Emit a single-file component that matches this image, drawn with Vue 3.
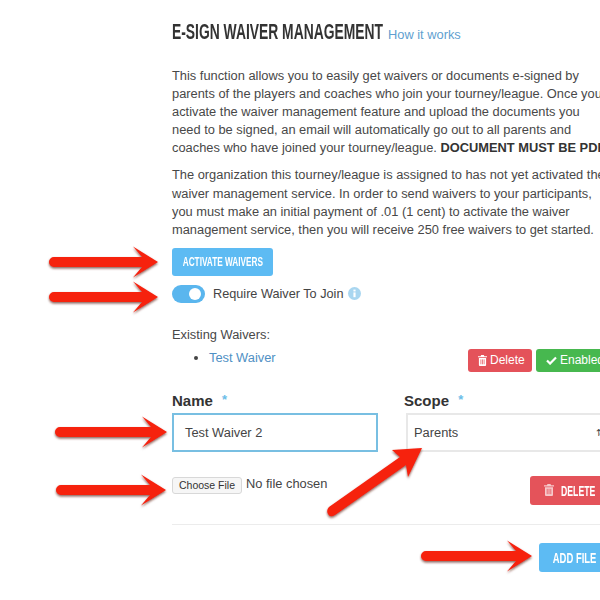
<template>
  <div class="page">
    <div class="panel">
      <div class="title-row">
        <h1 class="title"><span class="squeeze">E-SIGN WAIVER MANAGEMENT</span></h1>
        <a class="how">How it works</a>
      </div>

      <p class="para">
        This function allows you to easily get waivers or documents e-signed by<br />
        parents of the players and coaches who join your tourney/league. Once you<br />
        activate the waiver management feature and upload the documents you<br />
        need to be signed, an email will automatically go out to all parents and<br />
        coaches who have joined your tourney/league. <b>DOCUMENT MUST BE PDF.</b>
      </p>
      <p class="para second">
        The organization this tourney/league is assigned to has not yet activated the<br />
        waiver management service. In order to send waivers to your participants,<br />
        you must make an initial payment of .01 (1 cent) to activate the waiver<br />
        management service, then you will receive 250 free waivers to get started.
      </p>

      <button class="btn btn-blue activate"><span class="squeeze">ACTIVATE WAIVERS</span></button>

      <div class="toggle-row">
        <span class="toggle"><span class="knob"></span></span>
        <span class="toggle-label">Require Waiver To Join</span>
        <svg class="info" viewBox="0 0 12 12" width="13" height="13">
          <circle cx="6" cy="6" r="6" fill="#a9d6f0" />
          <rect x="5" y="5" width="2" height="4.4" fill="#fff" />
          <rect x="5" y="2.4" width="2" height="1.7" fill="#fff" />
        </svg>
      </div>

      <div class="existing-label">Existing Waivers:</div>
      <div class="existing-row">
        <ul class="list"><li><a>Test Waiver</a></li></ul>
        <div class="actions">
          <button class="small small-red">
            <svg viewBox="0 0 10 12" width="9" height="11">
              <path fill="#fff" d="M3.5 0h3l.6 1.2H10v1.3H0V1.2h2.9zM1 3.3h8V11a1 1 0 0 1-1 1H2a1 1 0 0 1-1-1z" />
              <path stroke="#e4525a" stroke-width=".8" d="M3.2 4.8v5.4M5 4.8v5.4M6.8 4.8v5.4" />
            </svg>
            Delete
          </button>
          <button class="small small-green">
            <svg viewBox="0 0 12 10" width="11" height="9">
              <path fill="none" stroke="#fff" stroke-width="2.4" d="M1 5l3.4 3.4L11 1.6" />
            </svg>
            Enabled
          </button>
        </div>
      </div>

      <div class="form-row">
        <div class="col-name">
          <label class="label">Name <span class="star">*</span></label>
          <div class="input focused">Test Waiver 2</div>
          <div class="file-row">
            <span class="choose">Choose File</span>
            <span class="no-file">No file chosen</span>
          </div>
        </div>
        <div class="col-scope">
          <label class="label">Scope <span class="star">*</span></label>
          <div class="input select">Parents<span class="caret">⇅</span></div>
          <div class="delete-wrap">
            <button class="btn btn-red">
              <svg viewBox="0 0 10 12" width="10" height="12">
                <path fill="#f6c9cb" d="M3.5 0h3l.6 1.2H10v1.3H0V1.2h2.9zM1 3.3h8V11a1 1 0 0 1-1 1H2a1 1 0 0 1-1-1z" />
                <path stroke="#e4525a" stroke-width=".8" d="M3.2 4.8v5.4M5 4.8v5.4M6.8 4.8v5.4" />
              </svg>
              <span class="squeeze delete-text">DELETE</span>
            </button>
          </div>
        </div>
      </div>

      <hr class="rule" />

      <div class="add-row">
        <button class="btn btn-blue add"><span class="squeeze add-text">ADD FILE</span></button>
      </div>
    </div>

    <!-- annotation arrows drawn over the screenshot -->
    <svg class="arrows" viewBox="0 0 600 600" width="600" height="600">
      <defs>
        <filter id="shade" x="-20%" y="-40%" width="140%" height="180%">
          <feDropShadow dx="0" dy="1.5" stdDeviation="1.2" flood-color="#5a1a10" flood-opacity=".7" />
        </filter>
      </defs>
      <g fill="#f6200f" filter="url(#shade)">
        <path v-for="a in arrows" :key="a.y" :d="arrowPath(a)" />
        <path d="M329 507 L400 457 L392 450 L422 448 L408 477 L406 465 L335 515 Q330 518 328 514 Q326 510 329 507 Z" />
      </g>
    </svg>
  </div>
</template>

<script setup>
const arrows = [
  { x1: 49, x2: 158, y: 262 },
  { x1: 49, x2: 158, y: 297 },
  { x1: 55, x2: 167, y: 432 },
  { x1: 56, x2: 166, y: 490 },
  { x1: 421, x2: 532, y: 556 }
]

// horizontal arrow with rounded tail and swept-back head
const arrowPath = ({ x1, x2, y }) => {
  const neck = x2 - 16
  const barb = x2 - 25
  return `M${x1 + 5} ${y - 5} H${neck} L${barb} ${y - 15.5} L${x2} ${y} L${barb} ${y + 15.5} L${neck} ${y + 5} H${x1 + 5} a5 5 0 0 1 0 -10 Z`
}
</script>

<style scoped>
.page {
  position: relative;
  width: 600px;
  height: 600px;
  overflow: hidden;
  background: #fff;
  font-family: "Liberation Sans", Arial, sans-serif;
  color: #444;
}

.panel {
  width: 470px;
  padding: 19px 0 0 172px;
}

.title-row {
  display: flex;
  align-items: baseline;
  gap: 5px;
  height: 26px;
}

.title {
  flex: 0 0 211px;
  min-width: 0;
  width: 211px;
  margin: 0;
  font-size: 22px;
  line-height: 26px;
  font-weight: 700;
  color: #333;
  white-space: nowrap;
}

.title .squeeze {
  transform: scaleX(0.63);
  transform-origin: left;
}

.squeeze {
  display: inline-block;
  flex-shrink: 0;
  white-space: nowrap;
}

.how {
  color: #5f9fd0;
  font-size: 12.85px;
}

.para {
  margin: 22px 0 0;
  font-size: 12.85px;
  line-height: 18.1px;
  color: #484848;
  white-space: nowrap;
}

.para b {
  color: #333;
}

.second {
  margin-top: 9px;
}

.btn {
  display: flex;
  align-items: center;
  justify-content: center;
  border: 0;
  border-radius: 3px;
  color: #fff;
  font-family: inherit;
  font-weight: 700;
  padding: 0;
}

.btn-blue {
  background: #5dbbf3;
}

.btn-red {
  gap: 7px;
  width: 78px;
  height: 29px;
  flex-shrink: 0;
  justify-content: flex-start;
  padding-left: 14px;
  background: #e4535a;
  font-size: 15px;
}

.delete-text {
  width: 34px;
  transform: scaleX(0.58);
  transform-origin: left;
}

.activate {
  width: 101px;
  height: 28px;
  margin-top: 9px;
  font-size: 12.5px;
}

.activate .squeeze {
  transform: scaleX(0.66);
}

.toggle-row {
  display: flex;
  align-items: center;
  height: 20px;
  margin-top: 8px;
}

.toggle {
  position: relative;
  width: 33px;
  height: 18px;
  border-radius: 9px;
  background: #5ab6ee;
}

.knob {
  position: absolute;
  top: 3px;
  right: 4px;
  width: 12px;
  height: 12px;
  border-radius: 50%;
  background: #fff;
}

.toggle-label {
  margin-left: 8px;
  font-size: 12.7px;
  color: #444;
}

.info {
  margin-left: 5px;
}

.existing-label {
  margin-top: 22px;
  font-size: 12.85px;
  line-height: 18px;
  color: #484848;
}

.existing-row {
  display: flex;
  height: 47px;
}

.list {
  flex: 0 0 296px;
  box-sizing: border-box;
  margin: 5px 0 0;
  padding-left: 37px;
  font-size: 12.85px;
  line-height: 18px;
}

.list a {
  color: #4f90c4;
}

.actions {
  display: flex;
  flex-shrink: 0;
  gap: 4px;
  height: 23px;
  margin-top: 5px;
}

.small {
  display: flex;
  flex-shrink: 0;
  align-items: center;
  gap: 3px;
  height: 23px;
  padding: 0 0 0 10px;
  border: 0;
  border-radius: 3px;
  color: #fff;
  font-family: inherit;
  font-size: 12px;
}

.small-red {
  width: 64px;
  background: #e4525a;
}

.small-green {
  width: 76px;
  background: #47b84f;
}

.form-row {
  display: flex;
  gap: 26px;
}

.col-name {
  width: 206px;
  flex-shrink: 0;
}

.col-scope {
  width: 238px;
  flex-shrink: 0;
}

.label {
  display: block;
  height: 22px;
  font-size: 15px;
  line-height: 18px;
  font-weight: 700;
  color: #333;
}

.star {
  margin-left: 5px;
  color: #6bbde8;
  font-size: 13px;
  vertical-align: 2px;
}

.input {
  box-sizing: border-box;
  height: 39px;
  border: 2px solid #e8e8e8;
  font-size: 12.85px;
  line-height: 36px;
  color: #444;
}

.focused {
  padding-left: 11px;
  border-color: #78bfe2;
}

.select {
  position: relative;
  margin-left: 2px;
  padding-left: 6px;
}

.caret {
  position: absolute;
  right: 36px;
  top: 0;
  font-size: 10px;
}

.file-row {
  display: flex;
  align-items: center;
  gap: 4px;
  margin-top: 25px;
}

.choose {
  box-sizing: border-box;
  width: 70px;
  height: 17px;
  border: 1px solid #d8d8d8;
  border-radius: 3px;
  background: #f6f6f6;
  font-size: 10.5px;
  line-height: 15px;
  text-align: center;
  color: #333;
}

.no-file {
  position: relative;
  top: -2px;
  font-size: 12.85px;
  color: #444;
}

.delete-wrap {
  display: flex;
  margin: 24px 0 0 126px;
}

.rule {
  width: 440px;
  margin: 19px 0 0;
  border: 0;
  border-top: 1px solid #ececec;
}

.add-row {
  display: flex;
  padding: 18px 0 0 367px;
}

.add {
  width: 71px;
  height: 29px;
  flex-shrink: 0;
  font-size: 15px;
}

.add-text {
  transform: scaleX(0.63);
}

.arrows {
  position: absolute;
  left: 0;
  top: 0;
  pointer-events: none;
}
</style>
